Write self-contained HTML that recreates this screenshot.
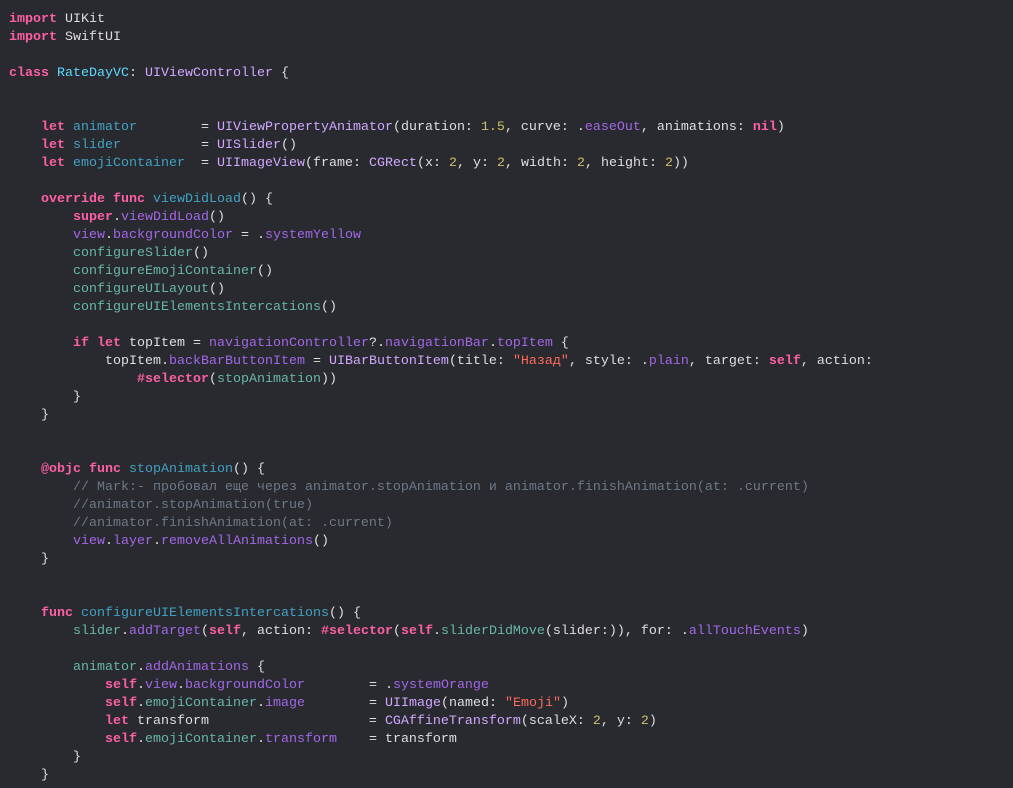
<!DOCTYPE html>
<html><head><meta charset="utf-8"><style>
html,body{margin:0;padding:0;background:#292a2f;width:1013px;height:788px;overflow:hidden}
pre{margin:0;padding:11px 0 0 9px;font-family:"Liberation Mono","DejaVu Sans Mono",monospace;font-size:13.33px;line-height:18px;color:#dfdfe0;white-space:pre}
.k{color:#fc5fa3;font-weight:bold}.d{color:#41a1c0}.t{color:#5dd8ff}.c{color:#d0a8ff}.p{color:#a167e6}.g{color:#67b7a4}.s{color:#fc6a5d}.n{color:#d0bf69}.m{color:#6c7986}
</style></head><body><pre><span class="k">import</span> UIKit
<span class="k">import</span> SwiftUI

<span class="k">class</span> <span class="t">RateDayVC</span>: <span class="c">UIViewController</span> {


    <span class="k">let</span> <span class="d">animator</span>        = <span class="c">UIViewPropertyAnimator</span>(duration: <span class="n">1.5</span>, curve: .<span class="p">easeOut</span>, animations: <span class="k">nil</span>)
    <span class="k">let</span> <span class="d">slider</span>          = <span class="c">UISlider</span>()
    <span class="k">let</span> <span class="d">emojiContainer</span>  = <span class="c">UIImageView</span>(frame: <span class="c">CGRect</span>(x: <span class="n">2</span>, y: <span class="n">2</span>, width: <span class="n">2</span>, height: <span class="n">2</span>))

    <span class="k">override</span> <span class="k">func</span> <span class="d">viewDidLoad</span>() {
        <span class="k">super</span>.<span class="p">viewDidLoad</span>()
        <span class="p">view</span>.<span class="p">backgroundColor</span> = .<span class="p">systemYellow</span>
        <span class="g">configureSlider</span>()
        <span class="g">configureEmojiContainer</span>()
        <span class="g">configureUILayout</span>()
        <span class="g">configureUIElementsIntercations</span>()

        <span class="k">if</span> <span class="k">let</span> topItem = <span class="p">navigationController</span>?.<span class="p">navigationBar</span>.<span class="p">topItem</span> {
            topItem.<span class="p">backBarButtonItem</span> = <span class="c">UIBarButtonItem</span>(title: <span class="s">"Назад"</span>, style: .<span class="p">plain</span>, target: <span class="k">self</span>, action:
                <span class="k">#selector</span>(<span class="g">stopAnimation</span>))
        }
    }


    <span class="k">@objc</span> <span class="k">func</span> <span class="d">stopAnimation</span>() {
        <span class="m">// Mark:- пробовал еще через animator.stopAnimation и animator.finishAnimation(at: .current)</span>
        <span class="m">//animator.stopAnimation(true)</span>
        <span class="m">//animator.finishAnimation(at: .current)</span>
        <span class="p">view</span>.<span class="p">layer</span>.<span class="p">removeAllAnimations</span>()
    }


    <span class="k">func</span> <span class="d">configureUIElementsIntercations</span>() {
        <span class="g">slider</span>.<span class="p">addTarget</span>(<span class="k">self</span>, action: <span class="k">#selector</span>(<span class="k">self</span>.<span class="g">sliderDidMove</span>(slider:)), for: .<span class="p">allTouchEvents</span>)

        <span class="g">animator</span>.<span class="p">addAnimations</span> {
            <span class="k">self</span>.<span class="p">view</span>.<span class="p">backgroundColor</span>        = .<span class="p">systemOrange</span>
            <span class="k">self</span>.<span class="g">emojiContainer</span>.<span class="p">image</span>        = <span class="c">UIImage</span>(named: <span class="s">"Emoji"</span>)
            <span class="k">let</span> transform                    = <span class="c">CGAffineTransform</span>(scaleX: <span class="n">2</span>, y: <span class="n">2</span>)
            <span class="k">self</span>.<span class="g">emojiContainer</span>.<span class="p">transform</span>    = transform
        }
    }
</pre></body></html>
